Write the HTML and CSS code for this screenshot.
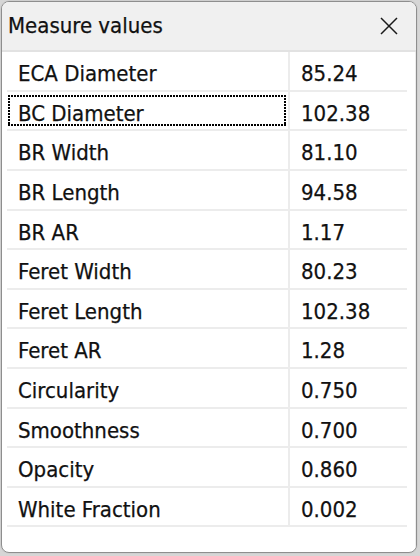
FILE: index.html
```html
<!DOCTYPE html>
<html>
<head>
<meta charset="utf-8">
<title>Measure values</title>
<link rel="stylesheet" href="styles.css">
</head>
<body>
<div class="window">
  <div class="titlebar">
    <span class="title">Measure values</span>
    <svg class="close" width="18" height="18" viewBox="0 0 18 18">
      <path d="M1 1 L17 17 M17 1 L1 17" stroke="#1a1a1a" stroke-width="1.5" fill="none"/>
    </svg>
  </div>
  <div class="content">
    <div class="grid">
      <div class="cell name">ECA Diameter</div><div class="cell val">85.24</div>
      <div class="cell name focus">BC Diameter</div><div class="cell val">102.38</div>
      <div class="cell name">BR Width</div><div class="cell val">81.10</div>
      <div class="cell name">BR Length</div><div class="cell val">94.58</div>
      <div class="cell name">BR AR</div><div class="cell val">1.17</div>
      <div class="cell name">Feret Width</div><div class="cell val">80.23</div>
      <div class="cell name">Feret Length</div><div class="cell val">102.38</div>
      <div class="cell name">Feret AR</div><div class="cell val">1.28</div>
      <div class="cell name">Circularity</div><div class="cell val">0.750</div>
      <div class="cell name">Smoothness</div><div class="cell val">0.700</div>
      <div class="cell name">Opacity</div><div class="cell val">0.860</div>
      <div class="cell name">White Fraction</div><div class="cell val">0.002</div>
    </div>
  </div>
</div>
</body>
</html>
```

FILE: styles.css
```css
html, body {
  margin: 0;
  padding: 0;
}
body {
  width: 420px;
  height: 556px;
  overflow: hidden;
  background: #d6d6d6;
  font-family: "DejaVu Sans Condensed", "DejaVu Sans", sans-serif;
  font-stretch: semi-condensed;
  font-size: 22px;
  color: #111;
  -webkit-text-stroke: 0.25px #111;
}
.window {
  margin: 1px 0 0 1px;
  width: 414px;
  height: 550px;
  border: 1px solid #8e8e8e;
  border-radius: 8px;
  overflow: hidden;
  background: #fff;
  display: flex;
  flex-direction: column;
  box-shadow: 0 0 0 1px #cfcfcf;
}
.titlebar {
  flex: 0 0 48px;
  background: #f0f0f0;
  border-bottom: 2px solid #e2e2e2;
  display: flex;
  align-items: center;
  justify-content: space-between;
  padding: 0 18px 0 6px;
}
.title {
  line-height: 26px;
}
.close {
  display: block;
}
.content {
  flex: 1;
  padding: 0 0 0 5px;
  border-right: 1px solid #ececec;
}
.grid {
  display: grid;
  grid-template-columns: 283px 117px;
  grid-template-rows: 40px 39px 40px 40px 39px 40px 39px 40px 40px 39px 40px 39px;
}
.cell {
  box-sizing: border-box;
  border-bottom: 2px solid #ececec;
  padding-top: 9px;
  line-height: 26px;
  white-space: nowrap;
}
.name {
  padding-left: 11px;
  border-right: 2px solid #ececec;
  position: relative;
}
.val {
  padding-left: 11px;
}
.focus::after {
  content: "";
  position: absolute;
  left: 1px;
  right: 2px;
  top: 3px;
  bottom: 3px;
  background:
    repeating-linear-gradient(90deg, #000 0 2px, transparent 2px 3px) left top / 100% 2px no-repeat,
    repeating-linear-gradient(90deg, #000 0 2px, transparent 2px 3px) left bottom / 100% 2px no-repeat,
    repeating-linear-gradient(180deg, #000 0 2px, transparent 2px 3px) left top / 2px 100% no-repeat,
    repeating-linear-gradient(180deg, #000 0 2px, transparent 2px 3px) right top / 2px 100% no-repeat;
}
```
